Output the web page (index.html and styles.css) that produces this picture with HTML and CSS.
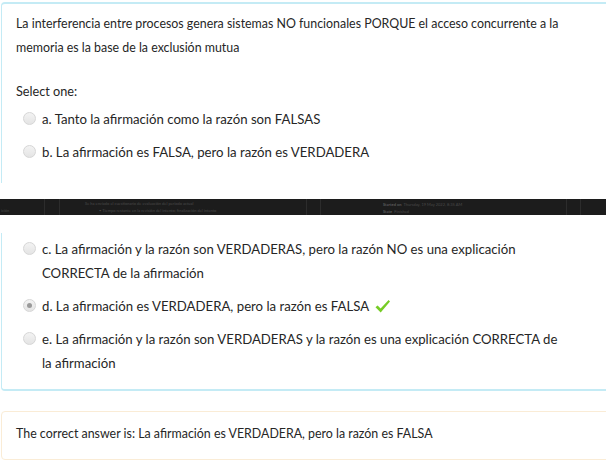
FILE: index.html
```html
<!DOCTYPE html>
<html lang="es">
<head>
<meta charset="utf-8">
<title>Pregunta</title>
<link rel="stylesheet" href="styles.css">
</head>
<body>
<div class="card card-top">
  <p class="qtext">La interferencia entre procesos genera sistemas NO funcionales PORQUE el acceso concurrente a la memoria es la base de la exclusión mutua</p>
  <p class="prompt">Select one:</p>
  <div class="opt"><span class="radio"></span><span class="label">a. Tanto la afirmación como la razón son FALSAS</span></div>
  <div class="opt"><span class="radio"></span><span class="label">b. La afirmación es FALSA, pero la razón es VERDADERA</span></div>
</div>

<div class="strip">
  <div class="cell c1">ición</div>
  <div class="cell c2"></div>
  <div class="cell c3">
    <div class="faint">Se ha enviado el cuestionario de evaluación del período actual</div>
    <div class="faint bullet">• Tiempo restante en la revisión del intento; finalización del intento</div>
  </div>
  <div class="cell c4"></div>
  <div class="cell c5">
    <div class="faint"><b>Started on</b>&nbsp; Thursday, 19 May 2022, 8:35 AM</div>
    <div class="faint"><b>State</b>&nbsp; Finished</div>
  </div>
  <div class="cell c6"></div>
  <div class="cell c7"></div>
</div>

<div class="card card-bottom">
  <div class="opt"><span class="radio"></span><span class="label">c. La afirmación y la razón son VERDADERAS, pero la razón NO es una explicación CORRECTA de la afirmación</span></div>
  <div class="opt"><span class="radio checked"></span><span class="label">d. La afirmación es VERDADERA, pero la razón es FALSA <svg class="tick" width="17" height="15" viewBox="0 0 17 15"><path d="M1.5 8.2 L3.6 6.4 L6.6 9.6 L14.6 1 L16 2.6 L6.7 13.6 Z" fill="#76cc25"/></svg></span></div>
  <div class="opt"><span class="radio"></span><span class="label">e. La afirmación y la razón son VERDADERAS y la razón es una explicación CORRECTA de la afirmación</span></div>
</div>

<div class="feedback">
  <p>The correct answer is: La afirmación es VERDADERA, pero la razón es FALSA</p>
</div>
</body>
</html>
```
FILE: styles.css
```css
html, body {
  margin: 0;
  padding: 0;
  background: #ffffff;
}
body {
  font-family: Lato, "Liberation Sans", sans-serif;
  font-size: 13.2px;
  color: #262626;
  line-height: 24px;
  width: 606px;
  overflow: hidden;
}
p { margin: 0; }

.card {
  margin-left: 1px;
  width: 640px;
  box-sizing: border-box;
  border: 1px solid #c4ebf5;
  padding-left: 14px;
  padding-right: 40px;
}
.card-top {
  margin-top: 2px;
  border-bottom: none;
  border-radius: 4px 4px 0 0;
  border-top-width: 2px;
  padding-top: 8px;
  height: 181px;
}
.qtext { width: 570px; font-size: 12.4px; }
.prompt { margin-top: 19px; font-size: 12.7px; }

.opt {
  display: flex;
  align-items: flex-start;
  padding: 4px 0 5px 7px;
}
.radio {
  flex: none;
  width: 11px;
  height: 11px;
  border-radius: 50%;
  border: 1px solid #d6d6d6;
  background: linear-gradient(#f3f3f3, #e4e4e4);
  margin-top: 5px;
  margin-right: 6px;
  position: relative;
}
.radio.checked::after {
  content: "";
  position: absolute;
  left: 3px;
  top: 3px;
  width: 5px;
  height: 5px;
  border-radius: 50%;
  background: #9a9a9a;
}
.label { width: 520px; }
.tick { vertical-align: -3px; margin-left: 2px; }

.strip {
  margin-top: 16px;
  height: 16px;
  background: #1c1c1c;
  display: flex;
  overflow: hidden;
  font-size: 4px;
  line-height: 7px;
  color: #4a4a4a;
}
.cell {
  box-sizing: border-box;
  border-right: 1px solid #2c2c2c;
  height: 16px;
}
.c1 { width: 45px; padding-top: 8px; padding-left: 1px; }
.c2 { width: 15px; }
.c3 { width: 247px; padding-left: 25px; padding-top: 1px; }
.c4 { width: 14px; }
.c5 { width: 246px; padding-left: 62px; padding-top: 2px; }
.c6 { width: 14px; }
.c7 { flex: 1; border-right: none; }
.faint b { color: #5a5a5a; }
.bullet { padding-left: 14px; }

.card-bottom {
  margin-top: 18px;
  border-top: none;
  border-bottom-width: 2px;
  border-radius: 0 0 4px 4px;
  padding-top: 0;
  padding-bottom: 9px;
}

.feedback {
  margin-top: 20px;
  margin-left: 1px;
  width: 640px;
  box-sizing: border-box;
  border: 1px solid #faecd6;
  border-radius: 4px;
  padding: 10px 14px 12px;
  height: 49px;
  font-size: 12.4px;
}
```
